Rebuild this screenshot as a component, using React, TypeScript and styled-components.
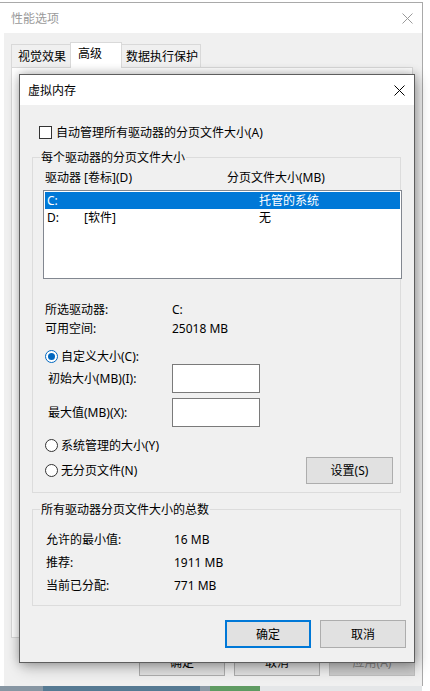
import React from "react";
import styled, { createGlobalStyle } from "styled-components";

const GlobalStyle = createGlobalStyle`
  html, body {
    margin: 0;
    padding: 0;
    background: #fff;
  }
  body {
    font-family: "Noto Sans", "Noto Sans CJK SC", sans-serif;
    font-size: 12px;
    color: #000;
  }
  * {
    box-sizing: border-box;
  }
`;

const Screen = styled.div`
  position: relative;
  width: 430px;
  height: 691px;
  overflow: hidden;
  background: #fff;
`;

const OuterWindow = styled.div`
  width: 423px;
  margin-top: 2px;
  border-top: 1px solid #a9a9a9;
  border-right: 1px solid #a9a9a9;
  background: #fff;
`;

const TitleBar = styled.div<{ inactive?: boolean }>`
  display: flex;
  align-items: center;
  justify-content: space-between;
  height: 30px;
  padding: 0 9px 0 ${({ inactive }) => (inactive ? "11px" : "8px")};
  background: #fff;
  color: ${({ inactive }) => (inactive ? "#9a9a9a" : "#000")};
  line-height: 17px;
`;

const CloseIcon = ({ color }: { color: string }) => (
  <svg width="11" height="11" viewBox="0 0 11 11">
    <path d="M0.5 0.5 L10.5 10.5 M10.5 0.5 L0.5 10.5" stroke={color} strokeWidth="1" fill="none" />
  </svg>
);

const OuterBody = styled.div`
  display: flex;
  flex-direction: column;
  height: 653px;
  margin-left: 4px;
  padding: 9px 9px 0 7px;
  background: #f0f0f0;
`;

const TabRow = styled.div`
  display: flex;
  align-items: flex-end;
  position: relative;
  z-index: 1;
`;

const Tab = styled.div<{ width: number; inset: number; selected?: boolean; overlap?: boolean }>`
  width: ${({ width }) => width}px;
  height: ${({ selected }) => (selected ? 26 : 23)}px;
  margin-left: ${({ selected, overlap }) => (selected || overlap ? -1 : 0)}px;
  margin-bottom: ${({ selected }) => (selected ? -1 : 0)}px;
  padding: ${({ selected }) => (selected ? "2px" : "3px")} 0 0 ${({ inset }) => inset}px;
  border: 1px solid #d9d9d9;
  border-bottom: none;
  background: ${({ selected }) => (selected ? "#fff" : "#f0f0f0")};
  line-height: 17px;
  white-space: nowrap;
  position: relative;
  z-index: ${({ selected }) => (selected ? 2 : 1)};
`;

const TabPanel = styled.div`
  width: 402px;
  height: 571px;
  border: 1px solid #d9d9d9;
  background: #fff;
`;

const OuterButtons = styled.div`
  display: flex;
  justify-content: flex-end;
  gap: 9px;
  margin: 10px -2px 0 0;
`;

const Button = styled.button<{ primary?: boolean; disabled?: boolean; width?: number; height?: number }>`
  width: ${({ width }) => width ?? 86}px;
  height: ${({ height }) => height ?? 28}px;
  padding: 0;
  font: inherit;
  line-height: 17px;
  color: ${({ disabled }) => (disabled ? "#838383" : "#000")};
  background: ${({ disabled }) => (disabled ? "#cccccc" : "#e1e1e1")};
  border: ${({ primary, disabled }) =>
    primary ? "2px solid #0078d7" : disabled ? "1px solid #bfbfbf" : "1px solid #adadad"};
`;

const DesktopStrip = styled.div`
  display: flex;
  height: 5px;
`;

const StripSegment = styled.div<{ w: number; c: string }>`
  width: ${({ w }) => w}px;
  background: ${({ c }) => c};
`;

const Dialog = styled.div`
  position: absolute;
  left: 19px;
  top: 74px;
  width: 396px;
  height: 589px;
  display: flex;
  flex-direction: column;
  border: 1px solid #5e5e5e;
  background: #f0f0f0;
  box-shadow: 0 0 10px rgba(0, 0, 0, 0.28), 3px 5px 14px rgba(0, 0, 0, 0.22);
  z-index: 5;
`;

const DialogBody = styled.div`
  flex: 1;
  padding: 19px 8px 0 12px;
  background: #f0f0f0;
`;

const CheckRow = styled.label`
  display: flex;
  align-items: center;
  gap: 4px;
  height: 17px;
  margin-left: 7px;
  line-height: 17px;
`;

const CheckBox = styled.span`
  width: 13px;
  height: 13px;
  border: 1px solid #333;
  background: #fff;
`;

const Group = styled.fieldset<{ top: number }>`
  width: 369px;
  min-width: 0;
  margin: ${({ top }) => top}px 0 0 0;
  padding: 0;
  border: 1px solid #dcdcdc;
`;

const Legend = styled.legend`
  margin-left: 7px;
  padding: 0 1px;
  line-height: 17px;
`;

const GroupContent = styled.div<{ pad: string }>`
  padding: ${({ pad }) => pad};
`;

const ColumnHeader = styled.div`
  display: grid;
  grid-template-columns: 182px 1fr;
  height: 17px;
  padding-left: 2px;
  line-height: 17px;
`;

const DriveList = styled.div`
  width: 359px;
  height: 89px;
  margin-top: 4px;
  padding: 1px;
  border: 1px solid #828790;
  background: #fff;
`;

const DriveRow = styled.div<{ selected?: boolean }>`
  display: grid;
  grid-template-columns: 37px 175px 1fr;
  height: 17px;
  padding-left: 2px;
  line-height: 17px;
  color: ${({ selected }) => (selected ? "#fff" : "#000")};
  background: ${({ selected }) => (selected ? "#0078d7" : "transparent")};
`;

const InfoList = styled.div`
  margin-top: 21px;
`;

const InfoRow = styled.div<{ labelWidth: number; rowHeight: number; inset: number }>`
  display: grid;
  grid-template-columns: ${({ labelWidth }) => labelWidth}px 1fr;
  align-items: center;
  height: ${({ rowHeight }) => rowHeight}px;
  padding-left: ${({ inset }) => inset}px;
  line-height: 17px;
`;

const RadioRow = styled.label<{ top: number }>`
  display: flex;
  align-items: center;
  gap: 3px;
  height: 16px;
  margin: ${({ top }) => top}px 0 0 2px;
  line-height: 17px;
`;

const Radio = styled.span<{ checked?: boolean }>`
  position: relative;
  width: 13px;
  height: 13px;
  border-radius: 50%;
  border: 1px solid ${({ checked }) => (checked ? "#0067c0" : "#333")};
  background: #fff;

  &::after {
    content: "";
    display: ${({ checked }) => (checked ? "block" : "none")};
    position: absolute;
    left: 2px;
    top: 2px;
    width: 7px;
    height: 7px;
    border-radius: 50%;
    background: #0067c0;
  }
`;

const SizeRow = styled.div<{ top: number }>`
  display: grid;
  grid-template-columns: 124px 88px;
  align-items: center;
  height: 29px;
  margin-top: ${({ top }) => top}px;
  padding-left: 5px;
  line-height: 17px;
`;

const SizeInput = styled.div`
  height: 29px;
  border: 1px solid #7a7a7a;
  background: #fff;
`;

const LastRow = styled.div`
  display: flex;
  align-items: center;
  height: 27px;
  margin-top: 4px;
`;

const RadioInline = styled.label`
  display: flex;
  align-items: center;
  gap: 3px;
  margin-left: 2px;
  line-height: 17px;
`;

const SetButton = styled(Button)`
  margin: 0 7px 0 auto;
`;

const DialogButtons = styled.div`
  display: flex;
  justify-content: flex-end;
  gap: 9px;
  margin-top: 14px;
`;

const drives = [
  { letter: "C:", label: "", size: "托管的系统", selected: true },
  { letter: "D:", label: "[软件]", size: "无", selected: false },
];

const totals = [
  ["允许的最小值:", "16 MB"],
  ["推荐:", "1911 MB"],
  ["当前已分配:", "771 MB"],
];

const strip: [number, string][] = [
  [43, "#8796a3"],
  [157, "#567a93"],
  [10, "#8c9ba6"],
  [50, "#5f9b62"],
  [162, "#e4e6e8"],
  [8, "#ffffff"],
];

export default function App() {
  return (
    <Screen>
      <GlobalStyle />
      <OuterWindow>
        <TitleBar inactive>
          <span>性能选项</span>
          <CloseIcon color="#9a9a9a" />
        </TitleBar>
        <OuterBody>
          <TabRow>
            <Tab width={60} inset={6}>视觉效果</Tab>
            <Tab width={52} inset={7} selected>高级</Tab>
            <Tab width={80} inset={4} overlap>数据执行保护</Tab>
          </TabRow>
          <TabPanel />
          <OuterButtons>
            <Button>确定</Button>
            <Button>取消</Button>
            <Button disabled>应用(A)</Button>
          </OuterButtons>
        </OuterBody>
      </OuterWindow>
      <DesktopStrip>
        {strip.map(([w, c], i) => (
          <StripSegment key={i} w={w} c={c} />
        ))}
      </DesktopStrip>

      <Dialog>
        <TitleBar>
          <span>虚拟内存</span>
          <CloseIcon color="#000" />
        </TitleBar>
        <DialogBody>
          <CheckRow>
            <CheckBox />
            <span>自动管理所有驱动器的分页文件大小(A)</span>
          </CheckRow>

          <Group top={8}>
            <Legend>每个驱动器的分页文件大小</Legend>
            <GroupContent pad="3px 0 8px 10px">
              <ColumnHeader>
                <span>驱动器 [卷标](D)</span>
                <span>分页文件大小(MB)</span>
              </ColumnHeader>
              <DriveList>
                {drives.map((d) => (
                  <DriveRow key={d.letter} selected={d.selected}>
                    <span>{d.letter}</span>
                    <span>{d.label}</span>
                    <span>{d.size}</span>
                  </DriveRow>
                ))}
              </DriveList>
              <InfoList>
                <InfoRow labelWidth={127} rowHeight={19} inset={2}>
                  <span>所选驱动器:</span>
                  <span>C:</span>
                </InfoRow>
                <InfoRow labelWidth={127} rowHeight={19} inset={2}>
                  <span>可用空间:</span>
                  <span>25018 MB</span>
                </InfoRow>
              </InfoList>
              <RadioRow top={10}>
                <Radio checked />
                <span>自定义大小(C):</span>
              </RadioRow>
              <SizeRow top={0}>
                <span>初始大小(MB)(I):</span>
                <SizeInput />
              </SizeRow>
              <SizeRow top={5}>
                <span>最大值(MB)(X):</span>
                <SizeInput />
              </SizeRow>
              <RadioRow top={10}>
                <Radio />
                <span>系统管理的大小(Y)</span>
              </RadioRow>
              <LastRow>
                <RadioInline>
                  <Radio />
                  <span>无分页文件(N)</span>
                </RadioInline>
                <SetButton width={87} height={27}>设置(S)</SetButton>
              </LastRow>
            </GroupContent>
          </Group>

          <Group top={8}>
            <Legend>所有驱动器分页文件大小的总数</Legend>
            <GroupContent pad="10px 0 8px 13px">
              {totals.map(([label, value]) => (
                <InfoRow key={label} labelWidth={128} rowHeight={23} inset={0}>
                  <span>{label}</span>
                  <span>{value}</span>
                </InfoRow>
              ))}
            </GroupContent>
          </Group>

          <DialogButtons>
            <Button primary>确定</Button>
            <Button>取消</Button>
          </DialogButtons>
        </DialogBody>
      </Dialog>
    </Screen>
  );
}
